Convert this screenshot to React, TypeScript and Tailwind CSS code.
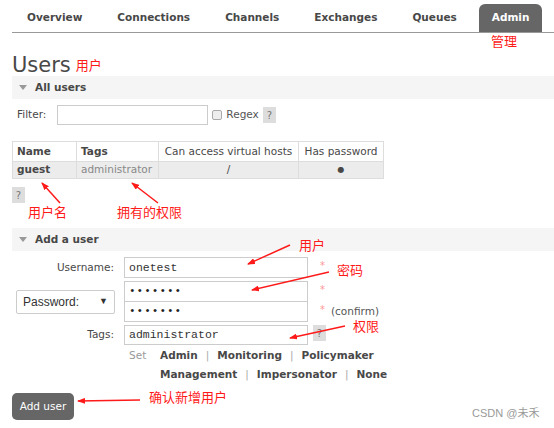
import React from "react";

const tabs = ["Overview", "Connections", "Channels", "Exchanges", "Queues", "Admin"];

// red annotation arrows drawn over the page: [tailX, tailY, tipX, tipY]
const ARROWS: [number, number, number, number][] = [
  [60, 203, 42, 183],
  [158, 203, 132, 183],
  [290, 245, 248, 264],
  [329, 272, 252, 290],
  [345, 326, 290, 338],
  [140, 400, 78, 401],
];

function Note({ text, x, y }: { text: string; x: number; y: number }) {
  return (
    <div
      className="absolute text-[13px] leading-none text-[#ff1a1a] whitespace-nowrap"
      style={{ left: x, top: y, fontFamily: '"Noto Sans CJK SC", sans-serif' }}
    >
      {text}
    </div>
  );
}

function HelpBox({ className = "" }: { className?: string }) {
  return (
    <span
      className={`inline-flex w-[13px] h-[16px] items-center justify-center bg-[#dddddd] text-[#777] text-[10px] ${className}`}
    >
      ?
    </span>
  );
}

function Section({ title }: { title: string }) {
  return (
    <div className="ml-[12px] h-[23px] bg-[#f5f5f5] flex items-center pl-[7px] gap-[8px]">
      <span className="w-0 h-0 border-l-[4px] border-r-[4px] border-t-[5px] border-l-transparent border-r-transparent border-t-[#999]" />
      <span className="font-bold text-[10.5px] text-[#484848]">{title}</span>
    </div>
  );
}

const sep = <span className="text-[#aaa] font-normal mx-[8px]">|</span>;

function Required() {
  return <span className="ml-[12px] self-start mt-[4px] text-[#f99] text-[10px] leading-none">*</span>;
}

export default function App() {
  return (
    <div
      className="relative w-[554px] h-[428px] bg-white overflow-hidden text-[#484848]"
      style={{ fontFamily: '"DejaVu Sans", Verdana, sans-serif' }}
    >
      {/* Top nav */}
      <div className="ml-[12px] h-[33px] flex items-end gap-[9px] pl-[2px] border-b border-[#999]">
        {tabs.map((t) => (
          <div
            key={t}
            className={`h-[28px] px-[13px] flex items-center text-[10.5px] font-bold ${
              t === "Admin" ? "bg-[#666] text-white rounded-t-[6px]" : "text-[#484848]"
            }`}
          >
            {t}
          </div>
        ))}
      </div>

      {/* Heading */}
      <div className="ml-[12px] h-[43px] flex items-end">
        <span className="text-[21px] leading-[22px] text-[#484848]">Users</span>
        <span
          className="ml-[5px] mb-[5px] text-[13px] leading-none text-[#ff1a1a]"
          style={{ fontFamily: '"Noto Sans CJK SC", sans-serif' }}
        >
          用户
        </span>
      </div>

      <Section title="All users" />

      {/* Filter */}
      <div className="ml-[17px] mt-[6px] flex items-center h-[20px] text-[10.5px]">
        <span>Filter:</span>
        <div className="ml-[11px] w-[151px] h-[20px] border border-[#ccc]" />
        <span className="ml-[4px] w-[10px] h-[10px] rounded-[2px] border border-[#aaa] bg-[#eee]" />
        <span className="ml-[4px] text-[#555]">Regex</span>
        <HelpBox className="ml-[4px]" />
      </div>

      {/* Users table */}
      <table className="ml-[12px] mt-[16px] border-collapse text-[10.5px]">
        <thead>
          <tr className="h-[20px]">
            <th className="w-[64px] border border-[#ddd] text-left pl-[4px] font-bold">Name</th>
            <th className="w-[82px] border border-[#ddd] text-left pl-[4px] font-bold">Tags</th>
            <th className="w-[140px] border border-[#ddd] text-center font-normal">Can access virtual hosts</th>
            <th className="w-[85px] border border-[#ddd] text-center font-normal">Has password</th>
          </tr>
        </thead>
        <tbody>
          <tr className="h-[17px] bg-[#ececec]">
            <td className="border-x border-b border-[#ddd] pl-[4px] font-bold">guest</td>
            <td className="border-x border-b border-[#ddd] pl-[4px] text-[#888]">administrator</td>
            <td className="border-x border-b border-[#ddd] text-center">/</td>
            <td className="border-x border-b border-[#ddd] text-center text-[8px]">●</td>
          </tr>
        </tbody>
      </table>

      <div className="ml-[12px] mt-[8px] flex">
        <HelpBox />
      </div>

      <div className="mt-[25px]">
        <Section title="Add a user" />
      </div>

      {/* Add user form */}
      <div className="mt-[6px] flex flex-col gap-[3px] text-[10.5px]">
        <div className="flex items-center">
          <div className="w-[124px] pr-[10px] text-right">Username:</div>
          <div
            className="w-[184px] h-[21px] border border-[#ccc] flex items-center px-[4px] text-[11.5px] text-[#333]"
            style={{ fontFamily: '"Liberation Mono", monospace' }}
          >
            onetest
          </div>
          <Required />
        </div>

        <div className="flex items-center">
          <div className="w-[124px] pl-[16px]">
            <div
              className="w-[99px] h-[24px] border border-[#ccc] rounded-[2px] flex items-center justify-between px-[6px] text-[12px] text-[#333]"
              style={{ fontFamily: '"Liberation Sans", Arial, sans-serif' }}
            >
              <span>Password:</span>
              <span className="text-[9px]">▼</span>
            </div>
          </div>
          <div className="flex flex-col">
            <div className="flex items-center">
              <div
                className="w-[184px] h-[21px] border border-[#ccc] flex items-center px-[4px] text-[11px] text-[#222] tracking-[1px]"
                style={{ fontFamily: '"Liberation Mono", monospace' }}
              >
                •••••••
              </div>
              <Required />
            </div>
            <div className="flex items-center -mt-px">
              <div
                className="w-[184px] h-[21px] border border-[#ccc] flex items-center px-[4px] text-[11px] text-[#222] tracking-[1px]"
                style={{ fontFamily: '"Liberation Mono", monospace' }}
              >
                •••••••
              </div>
              <Required />
              <span className="ml-[6px] text-[#555] leading-none">(confirm)</span>
            </div>
          </div>
        </div>

        <div className="flex items-center">
          <div className="w-[124px] pr-[10px] text-right">Tags:</div>
          <div
            className="w-[184px] h-[20px] border border-[#ccc] flex items-center px-[4px] text-[11.5px] text-[#333]"
            style={{ fontFamily: '"Liberation Mono", monospace' }}
          >
            administrator
          </div>
          <HelpBox className="ml-[5px] self-start" />
        </div>

        <div className="flex -mt-[2px]">
          <div className="w-[129px]" />
          <span className="w-[31px] text-[#999] leading-[19px]">Set</span>
          <div className="flex flex-col font-bold leading-[19px]">
            <div>
              Admin{sep}Monitoring{sep}Policymaker
            </div>
            <div>
              Management{sep}Impersonator{sep}None
            </div>
          </div>
        </div>
      </div>

      <div className="ml-[12px] mt-[9px] w-[62px] h-[27px] bg-[#666] rounded-[5px] flex items-center justify-center text-white text-[10.5px]">
        Add user
      </div>

      {/* Annotations */}
      <Note text="管理" x={491} y={34} />
      <Note text="用户名" x={28} y={205} />
      <Note text="拥有的权限" x={117} y={205} />
      <Note text="用户" x={299} y={238} />
      <Note text="密码" x={337} y={263} />
      <Note text="权限" x={353} y={319} />
      <Note text="确认新增用户" x={149} y={390} />

      <svg className="absolute inset-0 pointer-events-none" width={554} height={428}>
        <defs>
          <marker id="ah" markerWidth="8" markerHeight="6" refX="7" refY="3" orient="auto" markerUnits="userSpaceOnUse">
            <path d="M0,0 L8,3 L0,6 Z" fill="#ff1a1a" />
          </marker>
        </defs>
        {ARROWS.map(([x1, y1, x2, y2], i) => (
          <line key={i} x1={x1} y1={y1} x2={x2} y2={y2} stroke="#ff1a1a" strokeWidth={1.5} markerEnd="url(#ah)" />
        ))}
      </svg>

      <div
        className="absolute left-[472px] top-[405px] text-[11px] text-[#999] whitespace-nowrap"
        style={{ fontFamily: '"Liberation Sans", "Noto Sans CJK SC", sans-serif' }}
      >
        CSDN @未禾
      </div>
    </div>
  );
}
